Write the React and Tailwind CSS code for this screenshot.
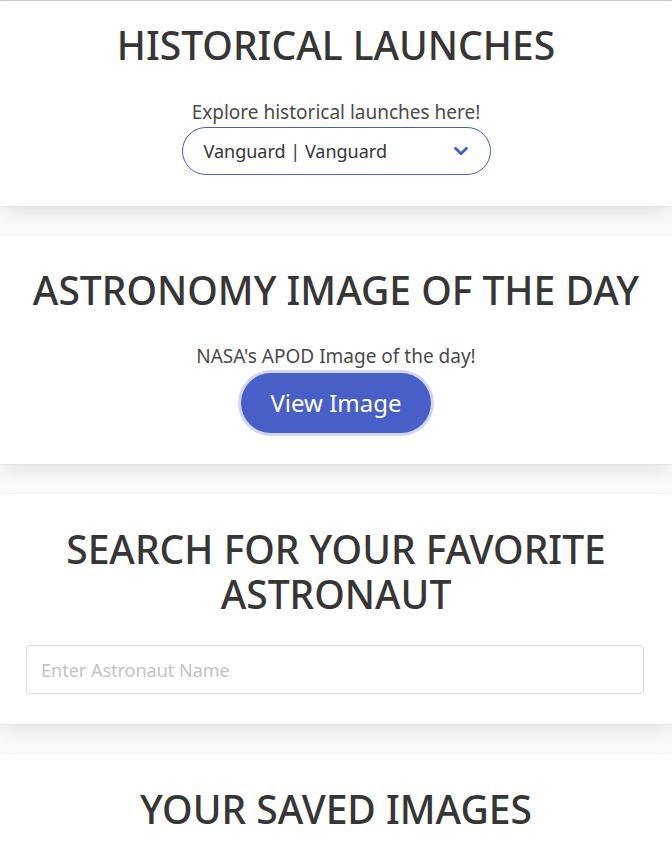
import { LuChevronDown as ChevronDown } from 'react-icons/lu';

const font = { fontFamily: '"Noto Sans", "Open Sans", sans-serif' };

const cardClass =
  'bg-white shadow-[0_8px_16px_-2px_rgba(10,10,10,0.1),0_0_0_1px_rgba(10,10,10,0.02)] flex flex-col items-center';

const headingClass = 'text-[39px] leading-[45px] font-medium text-[#363636] text-center';

const App = () => {
  return (
    <div className="min-h-screen bg-[#fafafa] border-t border-[#d0d0d0] flex flex-col gap-[30px]" style={font}>
      {/* Historical launches */}
      <section className={`${cardClass} pt-[21px] pb-[31px]`}>
        <h1 className={headingClass}>HISTORICAL LAUNCHES</h1>
        <p className="mt-[35px] text-[19px] leading-5 text-[#4a4a4a]">Explore historical launches here!</p>
        <div className="mt-[5px] w-[309px] h-[48px] rounded-full border border-[#485fc7] flex items-center justify-between pl-[21px] pr-[18px]">
          <span className="text-[18px] text-[#363636]">Vanguard | Vanguard</span>
          <ChevronDown className="text-[#485fc7]" size={22} strokeWidth={3} />
        </div>
      </section>

      {/* APOD */}
      <section className={`${cardClass} pt-[31px] pb-[31px]`}>
        <h1 className={headingClass}>ASTRONOMY IMAGE OF THE DAY</h1>
        <p className="mt-[34px] text-[19px] leading-5 text-[#4a4a4a]">NASA's APOD Image of the day!</p>
        <button className="mt-[7px] h-[60px] w-[190px] rounded-full bg-[#485fc7] text-white text-[24px] shadow-[0_0_0_3px_rgba(72,95,199,0.25)]">
          View Image
        </button>
      </section>

      {/* Astronaut search */}
      <section className={`${cardClass} pt-[32px] pb-[30px]`}>
        <h1 className={`${headingClass} px-[26px]`}>SEARCH FOR YOUR FAVORITE ASTRONAUT</h1>
        <div className="mt-[29px] w-full pl-[26px] pr-[28px]">
          <input
            className="w-full h-[49px] rounded-[4px] border border-[#dbdbdb] px-[14px] text-[18px] text-[#363636] placeholder:text-[#c2c2c2] outline-none"
            placeholder="Enter Astronaut Name"
          />
        </div>
      </section>

      {/* Saved images */}
      <section className={`${cardClass} pt-[32px] pb-[40px]`}>
        <h1 className={headingClass}>YOUR SAVED IMAGES</h1>
      </section>
    </div>
  );
};

export default App;
